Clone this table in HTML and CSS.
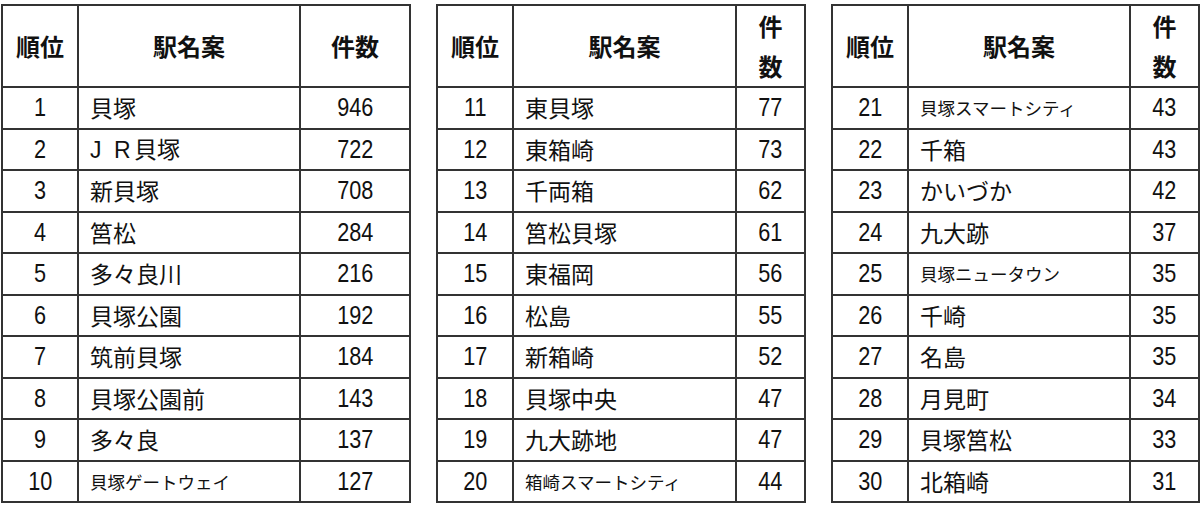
FILE: index.html
```html
<!DOCTYPE html>
<html lang="ja">
<head>
<meta charset="utf-8">
<link rel="stylesheet" href="styles.css">
</head>
<body>
<div class="wrap">
  <table class="rank t1">
    <colgroup><col class="c-rank"><col class="c-name1"><col class="c-count1"></colgroup>
    <thead><tr><th>順位</th><th>駅名案</th><th>件数</th></tr></thead>
    <tbody>
      <tr><td class="num"><span class="n">1</span></td><td class="name">貝塚</td><td class="num"><span class="n">946</span></td></tr>
      <tr><td class="num"><span class="n">2</span></td><td class="name"><span class="lat lat-j">J</span><span class="lat lat-r">R</span>貝塚</td><td class="num"><span class="n">722</span></td></tr>
      <tr><td class="num"><span class="n">3</span></td><td class="name">新貝塚</td><td class="num"><span class="n">708</span></td></tr>
      <tr><td class="num"><span class="n">4</span></td><td class="name">筥松</td><td class="num"><span class="n">284</span></td></tr>
      <tr><td class="num"><span class="n">5</span></td><td class="name">多々良川</td><td class="num"><span class="n">216</span></td></tr>
      <tr><td class="num"><span class="n">6</span></td><td class="name">貝塚公園</td><td class="num"><span class="n">192</span></td></tr>
      <tr><td class="num"><span class="n">7</span></td><td class="name">筑前貝塚</td><td class="num"><span class="n">184</span></td></tr>
      <tr><td class="num"><span class="n">8</span></td><td class="name">貝塚公園前</td><td class="num"><span class="n">143</span></td></tr>
      <tr><td class="num"><span class="n">9</span></td><td class="name">多々良</td><td class="num"><span class="n">137</span></td></tr>
      <tr><td class="num"><span class="n">10</span></td><td class="name small">貝塚ゲートウェイ</td><td class="num"><span class="n">127</span></td></tr>
    </tbody>
  </table>
  <table class="rank t2">
    <colgroup><col class="c-rank"><col class="c-name2"><col class="c-count2"></colgroup>
    <thead><tr><th>順位</th><th>駅名案</th><th class="stack">件<br>数</th></tr></thead>
    <tbody>
      <tr><td class="num"><span class="n">11</span></td><td class="name">東貝塚</td><td class="num"><span class="n">77</span></td></tr>
      <tr><td class="num"><span class="n">12</span></td><td class="name">東箱崎</td><td class="num"><span class="n">73</span></td></tr>
      <tr><td class="num"><span class="n">13</span></td><td class="name">千両箱</td><td class="num"><span class="n">62</span></td></tr>
      <tr><td class="num"><span class="n">14</span></td><td class="name">筥松貝塚</td><td class="num"><span class="n">61</span></td></tr>
      <tr><td class="num"><span class="n">15</span></td><td class="name">東福岡</td><td class="num"><span class="n">56</span></td></tr>
      <tr><td class="num"><span class="n">16</span></td><td class="name">松島</td><td class="num"><span class="n">55</span></td></tr>
      <tr><td class="num"><span class="n">17</span></td><td class="name">新箱崎</td><td class="num"><span class="n">52</span></td></tr>
      <tr><td class="num"><span class="n">18</span></td><td class="name">貝塚中央</td><td class="num"><span class="n">47</span></td></tr>
      <tr><td class="num"><span class="n">19</span></td><td class="name">九大跡地</td><td class="num"><span class="n">47</span></td></tr>
      <tr><td class="num"><span class="n">20</span></td><td class="name small">箱崎スマートシティ</td><td class="num"><span class="n">44</span></td></tr>
    </tbody>
  </table>
  <table class="rank t3">
    <colgroup><col class="c-rank"><col class="c-name3"><col class="c-count2"></colgroup>
    <thead><tr><th>順位</th><th>駅名案</th><th class="stack">件<br>数</th></tr></thead>
    <tbody>
      <tr><td class="num"><span class="n">21</span></td><td class="name small">貝塚スマートシティ</td><td class="num"><span class="n">43</span></td></tr>
      <tr><td class="num"><span class="n">22</span></td><td class="name">千箱</td><td class="num"><span class="n">43</span></td></tr>
      <tr><td class="num"><span class="n">23</span></td><td class="name">かいづか</td><td class="num"><span class="n">42</span></td></tr>
      <tr><td class="num"><span class="n">24</span></td><td class="name">九大跡</td><td class="num"><span class="n">37</span></td></tr>
      <tr><td class="num"><span class="n">25</span></td><td class="name small">貝塚ニュータウン</td><td class="num"><span class="n">35</span></td></tr>
      <tr><td class="num"><span class="n">26</span></td><td class="name">千崎</td><td class="num"><span class="n">35</span></td></tr>
      <tr><td class="num"><span class="n">27</span></td><td class="name">名島</td><td class="num"><span class="n">35</span></td></tr>
      <tr><td class="num"><span class="n">28</span></td><td class="name">月見町</td><td class="num"><span class="n">34</span></td></tr>
      <tr><td class="num"><span class="n">29</span></td><td class="name">貝塚筥松</td><td class="num"><span class="n">33</span></td></tr>
      <tr><td class="num"><span class="n">30</span></td><td class="name">北箱崎</td><td class="num"><span class="n">31</span></td></tr>
    </tbody>
  </table>
</div>
</body>
</html>
```

FILE: styles.css
```css
html, body {
  margin: 0;
  padding: 0;
  background: #ffffff;
}
body {
  font-family: "Noto Sans CJK JP", "Noto Sans", sans-serif;
  color: #111111;
}
.wrap {
  display: flex;
  align-items: flex-start;
  gap: 25px;
  padding: 4px 0 0 1px;
}
.rank {
  border-collapse: collapse;
  table-layout: fixed;
}
.t1 { width: 408px; }
.t2 { width: 368px; }
.t3 { width: 367px; }
.c-rank { width: 76px; }
.c-name1 { width: 222px; }
.c-count1 { width: 110px; }
.c-name2 { width: 223px; }
.c-name3 { width: 222px; }
.c-count2 { width: 69px; }
.rank th,
.rank td {
  border: 2px solid #333333;
  padding: 0;
}
.rank th {
  height: 80px;
  font-size: 24px;
  font-weight: 700;
  text-align: center;
  line-height: 40px;
}
.rank td {
  height: 39.5px;
  line-height: 1;
}
.num {
  text-align: center;
}
.n {
  display: inline-block;
  font-family: "Liberation Sans", Arial, sans-serif;
  font-size: 25.5px;
  transform: scaleX(0.85);
}
.name {
  text-align: left;
  padding-left: 11px !important;
  font-size: 23px;
  white-space: nowrap;
}
.lat {
  display: inline-block;
  font-family: "Liberation Sans", Arial, sans-serif;
}
.lat-j { width: 24px; }
.lat-r { width: 20px; }
.name.small {
  font-size: 17.5px;
}
```
